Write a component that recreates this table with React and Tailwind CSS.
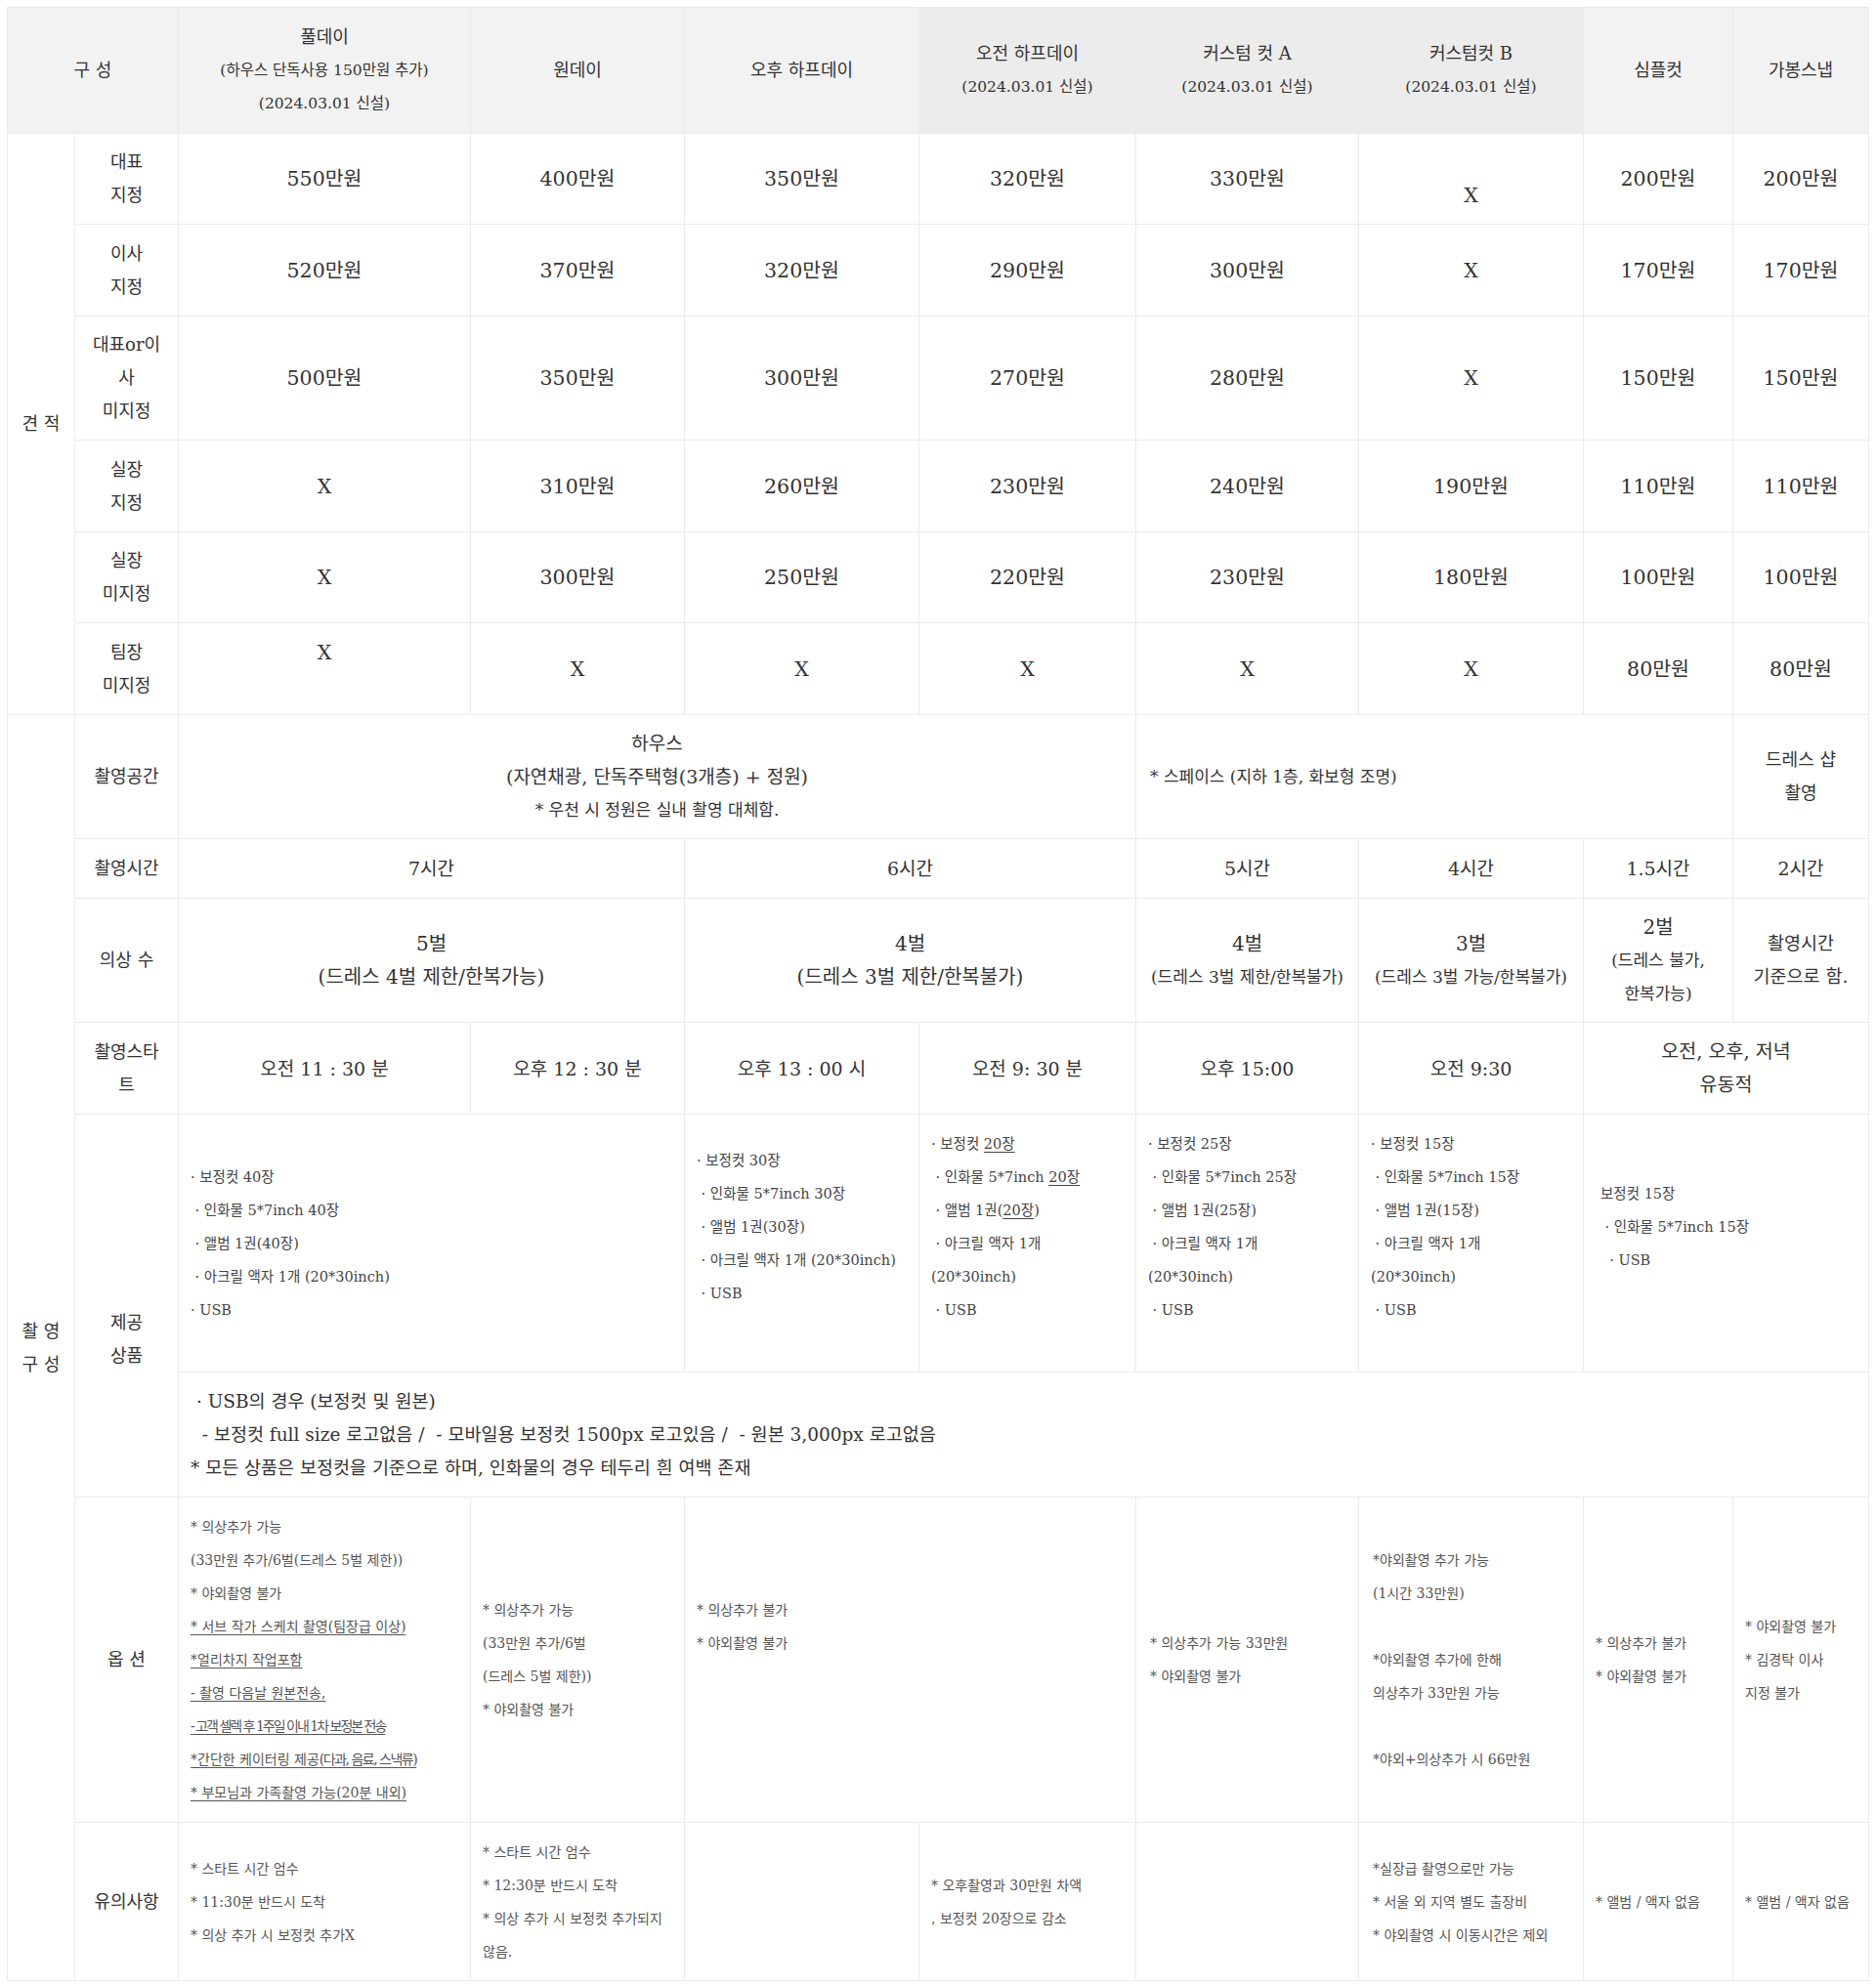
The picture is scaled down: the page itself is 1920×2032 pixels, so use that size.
import React from "react";

const cell = "border border-[#ebebeb] px-3 py-3 leading-[34px]";
const head = "border border-[#ebebeb] px-3 py-3 leading-[34px] font-normal text-[18px]";

// 한 줄씩 쪼개서 출력 (빈 문자열은 빈 줄)
function Lines({ lines }) {
  return lines.map((line, i) => (
    <div key={i} className="whitespace-pre">
      {line === "" ? "\u00a0" : line}
    </div>
  ));
}

function Price({ children }) {
  return <td className={`${cell} text-center text-[20.5px]`}>{children}</td>;
}

function Label({ children, className = "" }) {
  return <td className={`${cell} text-center text-[18px] ${className}`}>{children}</td>;
}

const U = ({ children, className = "" }) => (
  <span className={`underline underline-offset-[3px] ${className}`}>{children}</span>
);

const priceRows = [
  { label: ["대표", "지정"], h: "h-[93px]", values: ["550만원", "400만원", "350만원", "320만원", "330만원", "lowX", "200만원", "200만원"] },
  { label: ["이사", "지정"], h: "h-[94px]", values: ["520만원", "370만원", "320만원", "290만원", "300만원", "X", "170만원", "170만원"] },
  { label: ["대표or이", "사", "미지정"], h: "h-[127px]", values: ["500만원", "350만원", "300만원", "270만원", "280만원", "X", "150만원", "150만원"] },
  { label: ["실장", "지정"], h: "h-[94px]", values: ["X", "310만원", "260만원", "230만원", "240만원", "190만원", "110만원", "110만원"] },
  { label: ["실장", "미지정"], h: "h-[93px]", values: ["X", "300만원", "250만원", "220만원", "230만원", "180만원", "100만원", "100만원"] },
  { label: ["팀장", "미지정"], h: "h-[94px]", values: ["highX", "X", "X", "X", "X", "X", "80만원", "80만원"] },
];

function PriceValue({ v }) {
  if (v === "lowX") return <Lines lines={["", "X"]} />;
  if (v === "highX") return <Lines lines={["X", ""]} />;
  return v;
}

const small = `${cell} text-left text-[14px] text-[#555]`;
const goods = `${cell} text-left text-[14.5px] text-[#444]`;

export default function App() {
  return (
    <div className="min-h-screen bg-white pl-[7px] pt-[7px] font-['DejaVu_Serif','Noto_Sans_CJK_KR',serif] text-[#333]">
      <table className="w-[1905px] table-fixed border-collapse break-keep">
        <colgroup>
          <col className="w-[69px]" />
          <col className="w-[106px]" />
          <col className="w-[299px]" />
          <col className="w-[219px]" />
          <col className="w-[240px]" />
          <col className="w-[222px]" />
          <col className="w-[228px]" />
          <col className="w-[230px]" />
          <col className="w-[153px]" />
          <col className="w-[139px]" />
        </colgroup>

        <thead>
          <tr className="h-[129px]">
            <th colSpan={2} className={`${head} bg-[#f2f2f2]`}>구 성</th>
            <th className={`${head} bg-[#f2f2f2]`}>
              <div>풀데이</div>
              <div className="text-[15.5px]">(하우스 단독사용 150만원 추가)</div>
              <div className="text-[15.5px]">(2024.03.01 신설)</div>
            </th>
            <th className={`${head} bg-[#f2f2f2]`}>원데이</th>
            <th className={`${head} bg-[#f2f2f2]`}>오후 하프데이</th>
            <th className={`${head} bg-[#ececec]`}>
              <div>오전 하프데이</div>
              <div className="text-[15.5px]">(2024.03.01 신설)</div>
            </th>
            <th className={`${head} bg-[#ececec]`}>
              <div>커스텀 컷 A</div>
              <div className="text-[15.5px]">(2024.03.01 신설)</div>
            </th>
            <th className={`${head} bg-[#ececec]`}>
              <div>커스텀컷 B</div>
              <div className="text-[15.5px]">(2024.03.01 신설)</div>
            </th>
            <th className={`${head} bg-[#f2f2f2]`}>심플컷</th>
            <th className={`${head} bg-[#f2f2f2]`}>가봉스냅</th>
          </tr>
        </thead>

        <tbody>
          {/* 견적 */}
          {priceRows.map((row, i) => (
            <tr key={i} className={row.h}>
              {i === 0 && (
                <td rowSpan={6} className={`${cell} px-1 text-center text-[18px]`}>
                  견 적
                </td>
              )}
              <Label>
                <Lines lines={row.label} />
              </Label>
              {row.values.map((v, j) => (
                <Price key={j}>
                  <PriceValue v={v} />
                </Price>
              ))}
            </tr>
          ))}

          {/* 촬영구성 */}
          <tr className="h-[126px]">
            <td rowSpan={8} className={`${cell} px-1 text-center text-[18px]`}>
              <Lines lines={["촬 영", "구 성"]} />
            </td>
            <Label>촬영공간</Label>
            <td colSpan={4} className={`${cell} text-center text-[19px]`}>
              <div>하우스</div>
              <div>(자연채광, 단독주택형(3개층) + 정원)</div>
              <div className="text-[17px]">* 우천 시 정원은 실내 촬영 대체함.</div>
            </td>
            <td colSpan={3} className={`${cell} pl-[14px] text-left text-[17px]`}>
              * 스페이스 (지하 1층, 화보형 조명)
            </td>
            <td className={`${cell} text-center text-[18px]`}>
              <Lines lines={["드레스 샵", "촬영"]} />
            </td>
          </tr>

          <tr className="h-[61px]">
            <Label>촬영시간</Label>
            <td colSpan={2} className={`${cell} text-center text-[19px]`}>7시간</td>
            <td colSpan={2} className={`${cell} text-center text-[19px]`}>6시간</td>
            <td className={`${cell} text-center text-[19px]`}>5시간</td>
            <td className={`${cell} text-center text-[19px]`}>4시간</td>
            <td className={`${cell} text-center text-[19px]`}>1.5시간</td>
            <td className={`${cell} text-center text-[19px]`}>2시간</td>
          </tr>

          <tr className="h-[127px]">
            <Label>의상 수</Label>
            <td colSpan={2} className={`${cell} text-center text-[20px]`}>
              <Lines lines={["5벌", "(드레스 4벌 제한/한복가능)"]} />
            </td>
            <td colSpan={2} className={`${cell} text-center text-[20px]`}>
              <Lines lines={["4벌", "(드레스 3벌 제한/한복불가)"]} />
            </td>
            <td className={`${cell} px-1 text-center text-[20px]`}>
              <div>4벌</div>
              <div className="text-[17px]">(드레스 3벌 제한/한복불가)</div>
            </td>
            <td className={`${cell} px-1 text-center text-[20px]`}>
              <div>3벌</div>
              <div className="text-[17px]">(드레스 3벌 가능/한복불가)</div>
            </td>
            <td className={`${cell} text-center text-[20px]`}>
              <div>2벌</div>
              <div className="text-[17px]">(드레스 불가,</div>
              <div className="text-[17px]">한복가능)</div>
            </td>
            <td className={`${cell} px-1 text-center text-[18.5px]`}>
              <Lines lines={["촬영시간", "기준으로 함."]} />
            </td>
          </tr>

          <tr className="h-[94px]">
            <Label>
              <Lines lines={["촬영스타", "트"]} />
            </Label>
            <td className={`${cell} text-center text-[19px]`}>오전 11 : 30 분</td>
            <td className={`${cell} text-center text-[19px]`}>오후 12 : 30 분</td>
            <td className={`${cell} text-center text-[19px]`}>오후 13 : 00 시</td>
            <td className={`${cell} text-center text-[19px]`}>오전 9: 30 분</td>
            <td className={`${cell} text-center text-[19px]`}>오후 15:00</td>
            <td className={`${cell} text-center text-[19px]`}>오전 9:30</td>
            <td colSpan={2} className={`${cell} text-center text-[19.5px]`}>
              <Lines lines={["오전, 오후, 저녁", "유동적"]} />
            </td>
          </tr>

          {/* 제공 상품 */}
          <tr className="h-[264px]">
            <td rowSpan={2} className={`${cell} pt-[80px] text-center text-[18px]`}>
              <Lines lines={["제공", "상품"]} />
            </td>
            <td colSpan={2} className={goods}>
              <Lines
                lines={[
                  "· 보정컷 40장",
                  " · 인화물 5*7inch 40장",
                  " · 앨범 1권(40장)",
                  " · 아크릴 액자 1개 (20*30inch)",
                  "· USB",
                ]}
              />
            </td>
            <td className={`${goods} pr-1`}>
              <Lines
                lines={[
                  "· 보정컷 30장",
                  " · 인화물 5*7inch 30장",
                  " · 앨범 1권(30장)",
                  " · 아크릴 액자 1개 (20*30inch)",
                  " · USB",
                  "",
                ]}
              />
            </td>
            <td className={goods}>
              <div>· 보정컷 <U>20장</U></div>
              <div className="whitespace-pre"> · 인화물 5*7inch <U>20장</U></div>
              <div className="whitespace-pre"> · 앨범 1권(<U>20장</U>)</div>
              <Lines lines={[" · 아크릴 액자 1개", "(20*30inch)", " · USB", ""]} />
            </td>
            <td className={goods}>
              <Lines
                lines={[
                  "· 보정컷 25장",
                  " · 인화물 5*7inch 25장",
                  " · 앨범 1권(25장)",
                  " · 아크릴 액자 1개",
                  "(20*30inch)",
                  " · USB",
                  "",
                ]}
              />
            </td>
            <td className={goods}>
              <Lines
                lines={[
                  "· 보정컷 15장",
                  " · 인화물 5*7inch 15장",
                  " · 앨범 1권(15장)",
                  " · 아크릴 액자 1개",
                  "(20*30inch)",
                  " · USB",
                  "",
                ]}
              />
            </td>
            <td colSpan={2} className={`${goods} pl-[17px]`}>
              <Lines lines={["보정컷 15장", " · 인화물 5*7inch 15장", "  · USB", ""]} />
            </td>
          </tr>

          <tr className="h-[128px]">
            <td colSpan={8} className={`${cell} text-left text-[18.5px]`}>
              <Lines
                lines={[
                  " · USB의 경우 (보정컷 및 원본)",
                  "  - 보정컷 full size 로고없음 /  - 모바일용 보정컷 1500px 로고있음 /  - 원본 3,000px 로고없음",
                  "* 모든 상품은 보정컷을 기준으로 하며, 인화물의 경우 테두리 흰 여백 존재",
                ]}
              />
            </td>
          </tr>

          {/* 옵션 */}
          <tr className="h-[333px]">
            <Label>옵 션</Label>
            <td className={small}>
              <Lines lines={["* 의상추가 가능", "(33만원 추가/6벌(드레스 5벌 제한))", "* 야외촬영 불가"]} />
              <div><U>* 서브 작가 스케치 촬영(팀장급 이상)</U></div>
              <div><U>*얼리차지 작업포함</U></div>
              <div><U>- 촬영 다음날 원본전송,</U></div>
              <div><U className="tracking-[-2px]">- 고객 셀렉 후 1주일 이내 1차 보정본 전송</U></div>
              <div>
                <U>*간단한 케이터링 제공</U>
                <U className="tracking-[-1.5px]">(다과, 음료, 스낵류)</U>
              </div>
              <div><U>* 부모님과 가족촬영 가능(20분 내외)</U></div>
            </td>
            <td className={small}>
              <Lines lines={["* 의상추가 가능", "(33만원 추가/6벌", "(드레스 5벌 제한))", "* 야외촬영 불가"]} />
            </td>
            <td colSpan={2} className={small}>
              <Lines lines={["* 의상추가 불가", "* 야외촬영 불가", "", ""]} />
            </td>
            <td className={`${small} pl-[14px]`}>
              <Lines lines={["* 의상추가 가능 33만원", "* 야외촬영 불가"]} />
            </td>
            <td className={`${small} pl-[14px]`}>
              <Lines
                lines={[
                  "*야외촬영 추가 가능",
                  "(1시간 33만원)",
                  "",
                  "*야외촬영 추가에 한해",
                  "의상추가 33만원 가능",
                  "",
                  "*야외+의상추가 시 66만원",
                ]}
              />
            </td>
            <td className={small}>
              <Lines lines={["* 의상추가 불가", "* 야외촬영 불가"]} />
            </td>
            <td className={small}>
              <Lines lines={["* 야외촬영 불가", "* 김경탁 이사", "지정 불가"]} />
            </td>
          </tr>

          {/* 유의사항 */}
          <tr className="h-[162px]">
            <Label>유의사항</Label>
            <td className={small}>
              <Lines lines={["* 스타트 시간 엄수", "* 11:30분 반드시 도착", "* 의상 추가 시 보정컷 추가X"]} />
            </td>
            <td className={small}>
              <Lines lines={["* 스타트 시간 엄수", "* 12:30분 반드시 도착", "* 의상 추가 시 보정컷 추가되지", "않음."]} />
            </td>
            <td className={cell}></td>
            <td className={small}>
              <Lines lines={["* 오후촬영과 30만원 차액", ", 보정컷 20장으로 감소"]} />
            </td>
            <td className={cell}></td>
            <td className={`${small} pl-[14px]`}>
              <Lines lines={["*실장급 촬영으로만 가능", "* 서울 외 지역 별도 출장비", "* 야외촬영 시 이동시간은 제외"]} />
            </td>
            <td className={small}>* 앨범 / 액자 없음</td>
            <td className={small}>* 앨범 / 액자 없음</td>
          </tr>
        </tbody>
      </table>
    </div>
  );
}
